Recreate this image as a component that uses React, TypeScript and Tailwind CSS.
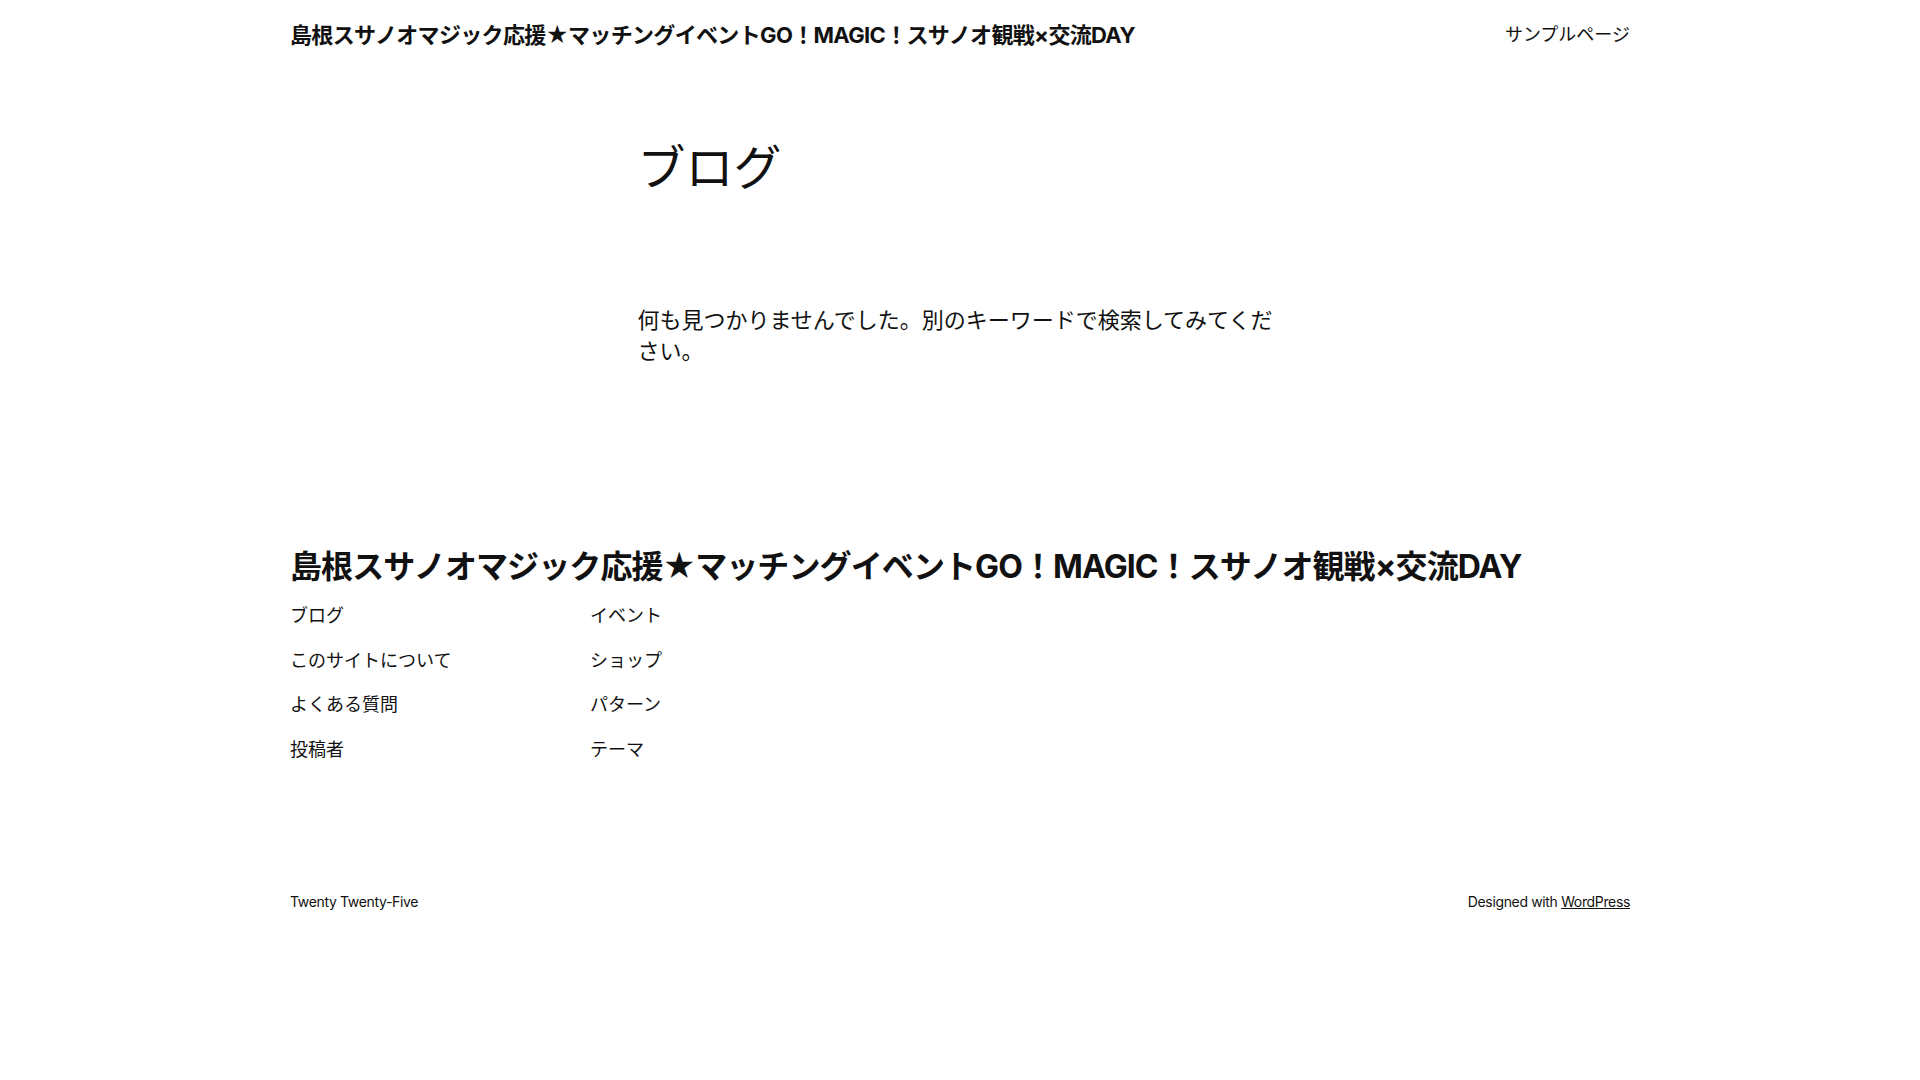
import React from 'react';

const font = { fontFamily: 'Inter, "Noto Sans CJK JP", sans-serif' };

const footerCols = [
  ['ブログ', 'このサイトについて', 'よくある質問', '投稿者'],
  ['イベント', 'ショップ', 'パターン', 'テーマ'],
];

const siteTitle = '島根スサノオマジック応援★マッチングイベントGO！MAGIC！スサノオ観戦×交流DAY';

function App() {
  return (
    <div className="min-h-screen bg-white text-[#111111]" style={font}>
      {/* Header */}
      <header className="mx-auto w-[1340px] h-[70px] flex items-center justify-between">
        <a className="text-[22px] font-bold leading-[1.2] tracking-[-0.03em]">{siteTitle}</a>
        <nav className="text-[18px] leading-[1.4]">サンプルページ</nav>
      </header>

      {/* Main */}
      <main className="mx-auto w-[645px]">
        <h1 className="mt-[69px] text-[48px] leading-[1.2] font-normal">ブログ</h1>
        <p className="mt-[108.5px] text-[22px] leading-[1.4]">
          何も見つかりませんでした。別のキーワードで検索してみてください。
        </p>
      </main>

      {/* Footer */}
      <footer className="mx-auto w-[1340px] mt-[181px] pb-[160px]">
        <div className="text-[32px] font-bold leading-[1.2] tracking-[-0.028em]">{siteTitle}</div>
        <div className="mt-[16px] flex">
          {footerCols.map((col, i) => (
            <ul key={i} className="w-[300px] flex flex-col gap-[17.5px]">
              {col.map((item) => (
                <li key={item} className="text-[18px] leading-[27px]">{item}</li>
              ))}
            </ul>
          ))}
        </div>
        <div className="mt-[128px] flex items-center justify-between text-[14px] leading-[22px] tracking-[-0.025em]">
          <p>Twenty Twenty-Five</p>
          <p>
            Designed with <a className="underline">WordPress</a>
          </p>
        </div>
      </footer>
    </div>
  );
}

export default App;
